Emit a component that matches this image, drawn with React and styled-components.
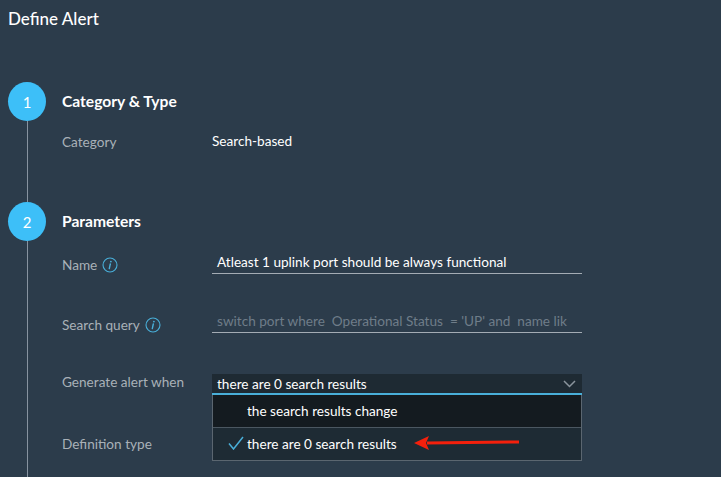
import React from 'react'
import styled, { createGlobalStyle } from 'styled-components';

const Global = createGlobalStyle`
body {
  margin: 0;
  background: #2c3c4b;
  font-family: Lato, "Noto Sans", sans-serif;
  color: #f1f3f4;
}
`
const Page = styled.div`
padding: 9px 8px 0 8px;
height: 477px;
box-sizing: border-box;
overflow: hidden;
`
const Title = styled.h1`
margin: 0;
font-size: 17px;
font-weight: 500;
line-height: 20px;
color: #ffffff;
`
const Steps = styled.div`
margin-top: 53px;
display: flex;
flex-direction: column;
`
const Step = styled.div`
display: flex;
padding-bottom: ${({ $pad }) => $pad}px;
position: relative;
`
const Rail = styled.div`
position: absolute;
left: 0;
top: 0;
bottom: 0;
width: 38px;
display: flex;
flex-direction: column;
align-items: center;
`
const Circle = styled.div`
width: 38px;
height: 39px;
border-radius: 50%;
background: #3dbff8;
color: #ffffff;
display: flex;
align-items: center;
justify-content: center;
font-size: 15px;
flex-shrink: 0;
`
const Line = styled.div`
flex: 1;
width: 1px;
background: #8793a0;
`
const Content = styled.div`
margin-left: 54px;
flex: 1;
`
const StepTitle = styled.div`
height: 38px;
display: flex;
align-items: center;
font-size: 15.6px;
font-weight: 700;
color: #ffffff;
`
const Row = styled.div`
display: flex;
align-items: flex-start;
margin-top: ${({ $top }) => $top}px;
`
const Label = styled.div`
width: 150px;
flex-shrink: 0;
display: flex;
align-items: center;
gap: 5px;
font-size: 13.6px;
line-height: 20px;
color: #a9b1b8;
margin-top: ${({ $shift }) => $shift || 0}px;
`
const Value = styled.div`
font-size: 13.6px;
line-height: 18px;
color: #ffffff;
`
const Input = styled.div`
width: 370px;
height: 21px;
box-sizing: border-box;
border-bottom: 1px solid #a4acb4;
padding: 0 5px;
font-size: 13.6px;
line-height: 19px;
white-space: nowrap;
overflow: hidden;
color: ${({ $placeholder }) => ($placeholder ? '#6f7d89' : '#ffffff')};
`
const SelectWrap = styled.div`
position: relative;
width: 370px;
`
const Select = styled.div`
height: 21px;
box-sizing: border-box;
background: #1e2a33;
border-bottom: 2px solid #49afd9;
padding: 0 6px 0 5px;
display: flex;
align-items: center;
justify-content: space-between;
font-size: 13.6px;
color: #ffffff;
`
const Menu = styled.div`
position: absolute;
top: 100%;
left: 0;
right: 0;
border: 1px solid #5b6670;
border-top: none;
z-index: 2;
`
const Item = styled.div`
height: 32px;
position: relative;
display: flex;
align-items: center;
padding-left: 34px;
padding-bottom: 1px;
box-sizing: border-box;
font-size: 13.6px;
color: #ffffff;
background: ${({ $selected }) => ($selected ? '#1e2b34' : '#141b20')};
& + & {
  border-top: 1px solid #4b5761;
  height: 33px;
}
`
const Check = styled.svg`
position: absolute;
left: 15px;
top: 8px;
`
const Arrow = styled.svg`
position: absolute;
left: 200px;
top: 7px;
`

const Info = () => (
    <svg width="16" height="16" viewBox="0 0 16 16" fill="none">
        <circle cx="8" cy="8" r="7" stroke="#49afd9" strokeWidth="1.1" />
        <circle cx="8.9" cy="4.6" r="0.9" fill="#49afd9" />
        <path d="M8.3 7 L7.3 11.6" stroke="#49afd9" strokeWidth="1.4" strokeLinecap="round" />
    </svg>
)

const App = () => {
    return (
        <Page>
            <Global />
            <Title>Define Alert</Title>
            <Steps>
                <Step $pad={50}>
                    <Rail>
                        <Circle>1</Circle>
                        <Line />
                    </Rail>
                    <Content>
                        <StepTitle>Category &amp; Type</StepTitle>
                        <Row $top={12}>
                            <Label>Category</Label>
                            <Value>Search-based</Value>
                        </Row>
                    </Content>
                </Step>
                <Step $pad={60}>
                    <Rail>
                        <Circle>2</Circle>
                        <Line />
                    </Rail>
                    <Content>
                        <StepTitle>Parameters</StepTitle>
                        <Row $top={13}>
                            <Label $shift={2}>Name <Info /></Label>
                            <Input>Atleast 1 uplink port should be always functional</Input>
                        </Row>
                        <Row $top={37}>
                            <Label $shift={3}>Search query <Info /></Label>
                            <Input $placeholder>switch port where&nbsp; Operational Status&nbsp; = 'UP' and&nbsp; name lik</Input>
                        </Row>
                        <Row $top={39}>
                            <Label $shift={-2}>Generate alert when</Label>
                            <SelectWrap>
                                <Select>
                                    there are 0 search results
                                    <svg width="13" height="8" viewBox="0 0 13 8" fill="none">
                                        <path d="M1 1 L6.5 6.5 L12 1" stroke="#8a949c" strokeWidth="1.5" />
                                    </svg>
                                </Select>
                                <Menu>
                                    <Item>the search results change</Item>
                                    <Item $selected>
                                        <Check width="16" height="14" viewBox="0 0 16 14" fill="none">
                                            <path d="M1 7.5 L5.5 13 L15 1" stroke="#49afd9" strokeWidth="1.5" />
                                        </Check>
                                        there are 0 search results
                                        <Arrow width="108" height="16" viewBox="0 0 108 16">
                                            <path d="M14 6.5 L106 5.5 L106 8.5 L14 9.5 Z" fill="#f4200c" />
                                            <path d="M1 8 L16 1 L13 8 L16 15 Z" fill="#f4200c" />
                                        </Arrow>
                                    </Item>
                                </Menu>
                            </SelectWrap>
                        </Row>
                        <Row $top={39}>
                            <Label>Definition type</Label>
                        </Row>
                    </Content>
                </Step>
            </Steps>
        </Page>
    )
}

export default App
